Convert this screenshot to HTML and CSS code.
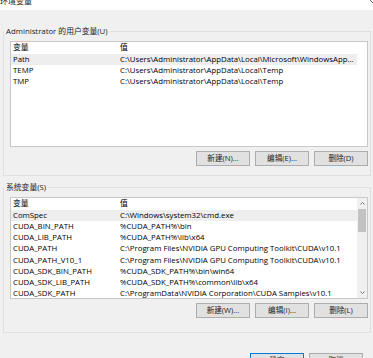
FILE: index.html
```html
<!DOCTYPE html>
<html lang="zh-CN">
<head>
<meta charset="utf-8">
<title>环境变量</title>
<link rel="stylesheet" href="styles.css">
</head>
<body>
<div class="titlebar">
  <span class="title">环境变量</span>
  <svg class="close" width="4" height="4" viewBox="0 0 4 4"><path d="M0 0L4 4" stroke="#444" stroke-width="0.8"/></svg>
</div>
<div class="content">
  <fieldset class="group g1">
    <legend>Administrator 的用户变量(U)</legend>
    <div class="list user">
      <div class="rows">
        <div class="row head"><span class="c1">变量</span><span class="c2">值</span></div>
        <div class="row sel"><span class="c1">Path</span><span class="c2">C:\Users\Administrator\AppData\Local\Microsoft\WindowsApp...</span></div>
        <div class="row"><span class="c1">TEMP</span><span class="c2">C:\Users\Administrator\AppData\Local\Temp</span></div>
        <div class="row"><span class="c1">TMP</span><span class="c2">C:\Users\Administrator\AppData\Local\Temp</span></div>
      </div>
    </div>
    <div class="btns">
      <button class="btn">新建(N)...</button>
      <button class="btn">编辑(E)...</button>
      <button class="btn">删除(D)</button>
    </div>
  </fieldset>
  <fieldset class="group g2">
    <legend>系统变量(S)</legend>
    <div class="list sys">
      <div class="rows">
        <div class="row head"><span class="c1">变量</span><span class="c2">值</span></div>
        <div class="row sel"><span class="c1">ComSpec</span><span class="c2">C:\Windows\system32\cmd.exe</span></div>
        <div class="row"><span class="c1">CUDA_BIN_PATH</span><span class="c2">%CUDA_PATH%\bin</span></div>
        <div class="row"><span class="c1">CUDA_LIB_PATH</span><span class="c2">%CUDA_PATH%\lib\x64</span></div>
        <div class="row"><span class="c1">CUDA_PATH</span><span class="c2">C:\Program Files\NVIDIA GPU Computing Toolkit\CUDA\v10.1</span></div>
        <div class="row"><span class="c1">CUDA_PATH_V10_1</span><span class="c2">C:\Program Files\NVIDIA GPU Computing Toolkit\CUDA\v10.1</span></div>
        <div class="row"><span class="c1">CUDA_SDK_BIN_PATH</span><span class="c2">%CUDA_SDK_PATH%\bin\win64</span></div>
        <div class="row"><span class="c1">CUDA_SDK_LIB_PATH</span><span class="c2">%CUDA_SDK_PATH%\common\lib\x64</span></div>
        <div class="row"><span class="c1">CUDA_SDK_PATH</span><span class="c2">C:\ProgramData\NVIDIA Corporation\CUDA Samples\v10.1</span></div>
      </div>
      <div class="sb">
        <div class="arrow"><svg width="5" height="3" viewBox="0 0 5 3"><path d="M0.5 2.5L2.5 0.5L4.5 2.5" fill="none" stroke="#606060" stroke-width="0.8"/></svg></div>
        <div class="thumb"></div>
        <div class="track"></div>
        <div class="arrow"><svg width="5" height="3" viewBox="0 0 5 3"><path d="M0.5 0.5L2.5 2.5L4.5 0.5" fill="none" stroke="#606060" stroke-width="0.8"/></svg></div>
      </div>
    </div>
    <div class="btns">
      <button class="btn">新建(W)...</button>
      <button class="btn">编辑(I)...</button>
      <button class="btn">删除(L)</button>
    </div>
  </fieldset>
  <div class="actions">
    <button class="btn default">确定</button>
    <button class="btn">取消</button>
  </div>
</div>
</body>
</html>
```
FILE: styles.css
```css
* { box-sizing: border-box; }
html, body { margin: 0; padding: 0; }
body {
  width: 373px;
  height: 358px;
  overflow: hidden;
  background: #f0f0f0;
  font-family: "Open Sans", "Noto Sans CJK SC", sans-serif;
  font-size: 7.8px;
  color: #000;
}
.titlebar {
  height: 10px;
  background: #fff;
  overflow: hidden;
  display: flex;
  justify-content: space-between;
  align-items: flex-start;
}
.title {
  display: block;
  margin-top: -5px;
  line-height: 12px;
  font-size: 8px;
  font-family: "Noto Sans CJK SC", sans-serif;
  color: #222;
}
.close { display: block; margin-right: -1px; }
.content {
  padding: 16px 2px 0 3px;
}
fieldset.group {
  margin: 0;
  padding: 0 2px 0 0;
  border: 1px solid #e0e0e0;
  min-width: 0;
}
legend {
  padding: 0 2px;
  margin: 0;
  height: 10px;
  line-height: 10px;
  font-size: 7.8px;
  color: #222;
}
fieldset.g1 { padding-bottom: 9px; }
fieldset.g2 { margin-top: 6px; padding-bottom: 14px; }
.list {
  display: flex;
  margin: 5px 0 0 6px;
  background: #fff;
  border: 1px solid #c8c8c8;
  overflow: hidden;
}
.user { height: 106px; }
.sys { height: 102px; }
.rows { flex: 1; min-width: 0; overflow: hidden; }
.user .rows { margin-right: 10px; }
.row {
  display: flex;
  height: 11.25px;
  line-height: 11.25px;
  white-space: nowrap;
}
.row.head { height: 11.5px; }
.row.sel { background: #eeeeee; }
.c1 { width: 109px; flex: none; padding-left: 2px; }
.c2 { flex: 1; overflow: hidden; }
.sb {
  width: 10px;
  flex: none;
  background: #f0f0f0;
  display: flex;
  flex-direction: column;
}
.arrow {
  height: 11px;
  display: flex;
  align-items: center;
  justify-content: center;
}
.thumb { height: 23px; background: #c2c2c2; margin: 0 1px; }
.track { flex: 1; }
.btns {
  display: flex;
  justify-content: flex-end;
  gap: 5px;
  margin-top: 4px;
}
.btn {
  width: 54px;
  height: 15px;
  padding: 0;
  margin: 0;
  background: #e1e1e1;
  border: 1px solid #adadad;
  font-family: inherit;
  font-size: 7.6px;
  color: #222;
  line-height: 13px;
}
.btn.default { border-color: #0078d7; }
.actions {
  display: flex;
  justify-content: flex-end;
  gap: 5px;
  margin-top: 20px;
  padding-right: 8px;
}
```
